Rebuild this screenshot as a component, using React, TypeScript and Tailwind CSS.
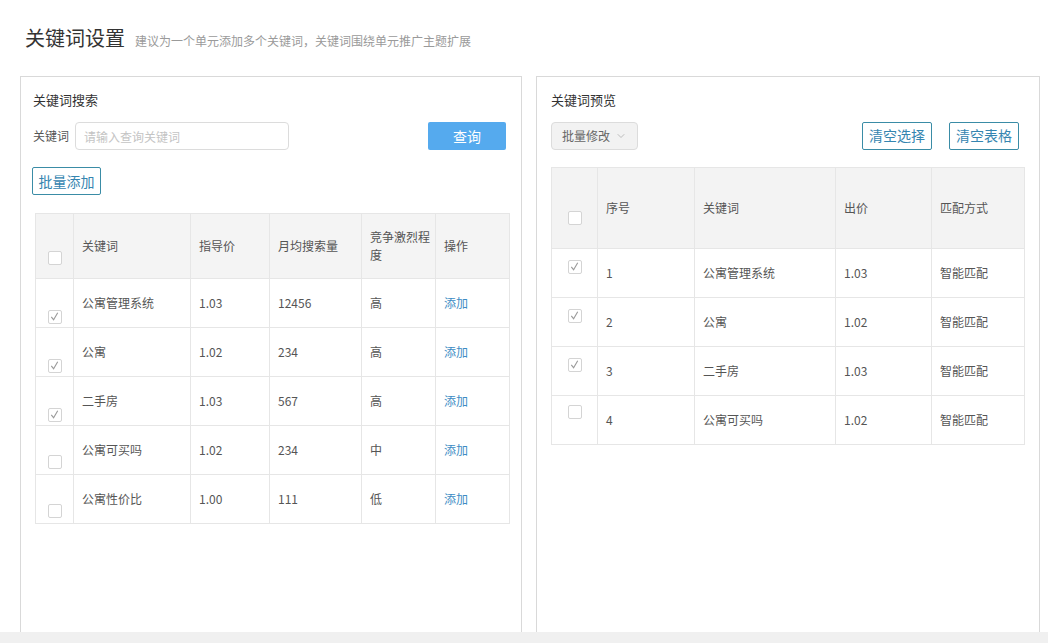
import { ChevronDown } from 'lucide-react';

interface SearchRow {
  keyword: string;
  price: string;
  volume: string;
  level: string;
  checked: boolean;
}

interface PreviewRow {
  index: number;
  keyword: string;
  bid: string;
  match: string;
  checked: boolean;
}

const searchRows: SearchRow[] = [
  { keyword: '公寓管理系统', price: '1.03', volume: '12456', level: '高', checked: true },
  { keyword: '公寓', price: '1.02', volume: '234', level: '高', checked: true },
  { keyword: '二手房', price: '1.03', volume: '567', level: '高', checked: true },
  { keyword: '公寓可买吗', price: '1.02', volume: '234', level: '中', checked: false },
  { keyword: '公寓性价比', price: '1.00', volume: '111', level: '低', checked: false },
];

const previewRows: PreviewRow[] = [
  { index: 1, keyword: '公寓管理系统', bid: '1.03', match: '智能匹配', checked: true },
  { index: 2, keyword: '公寓', bid: '1.02', match: '智能匹配', checked: true },
  { index: 3, keyword: '二手房', bid: '1.03', match: '智能匹配', checked: true },
  { index: 4, keyword: '公寓可买吗', bid: '1.02', match: '智能匹配', checked: false },
];

function Checkbox({ checked }: { checked: boolean }) {
  return (
    <span className="inline-flex h-[14px] w-[14px] items-center justify-center rounded-[2px] border border-[#d4d4d4] bg-white">
      {checked ? (
        <svg viewBox="0 0 12 12" className="h-[11px] w-[11px]" fill="none">
          <path d="M2.5 6.5 L5 9.5 L9.5 2" stroke="#9a9a9a" strokeWidth="1.2" />
        </svg>
      ) : null}
    </span>
  );
}

const cell = 'border border-[#e6e6e6] pl-2 text-left font-normal';

function SearchPanel() {
  return (
    <section className="flex h-full w-[502px] flex-col border-x border-t border-[#d9d9d9] bg-white">
      <h2 className="mt-[14px] pl-3 text-[13px] leading-[18px] text-[#333]">关键词搜索</h2>

      <div className="mt-[13px] flex items-center pl-3 pr-[15px]">
        <span className="text-[12px] text-[#555]">关键词</span>
        <input
          type="text"
          placeholder="请输入查询关键词"
          className="ml-[6px] h-[28px] w-[214px] rounded-[4px] border border-[#dcdcdc] px-2 text-[12px] text-[#333] outline-none placeholder:text-[#c4c4c4]"
        />
        <button
          type="button"
          className="ml-auto h-[28px] w-[78px] rounded-[2px] bg-[#55aaee] text-[14px] text-white"
        >
          查询
        </button>
      </div>

      <div className="mt-[17px] pl-[11px]">
        <button
          type="button"
          className="h-[28px] w-[69px] rounded-[2px] border border-[#3a8ca6] text-[14px] text-[#3585b0]"
        >
          批量添加
        </button>
      </div>

      <div className="mt-[18px] pl-[14px]">
        <table className="w-[474px] table-fixed border-collapse text-[12px] text-[#555]">
          <colgroup>
            <col className="w-[38px]" />
            <col className="w-[117px]" />
            <col className="w-[79px]" />
            <col className="w-[92px]" />
            <col className="w-[74px]" />
            <col className="w-[74px]" />
          </colgroup>
          <thead>
            <tr className="h-[65px] bg-[#f4f4f4]">
              <th className="border border-[#e6e6e6] pb-[9px] text-center align-bottom">
                <Checkbox checked={false} />
              </th>
              <th className={cell}>关键词</th>
              <th className={cell}>指导价</th>
              <th className={cell}>月均搜索量</th>
              <th className={`${cell} pr-1 leading-[18px]`}>竞争激烈程度</th>
              <th className={cell}>操作</th>
            </tr>
          </thead>
          <tbody>
            {searchRows.map((row) => (
              <tr key={row.keyword} className="h-[49px]">
                <td className="border border-[#e6e6e6] pb-[1px] text-center align-bottom">
                  <Checkbox checked={row.checked} />
                </td>
                <td className={cell}>{row.keyword}</td>
                <td className={cell}>{row.price}</td>
                <td className={cell}>{row.volume}</td>
                <td className={cell}>{row.level}</td>
                <td className={`${cell} text-[#3d8cc4]`}>添加</td>
              </tr>
            ))}
          </tbody>
        </table>
      </div>
    </section>
  );
}

function PreviewPanel() {
  return (
    <section className="flex h-full w-[504px] flex-col border-x border-t border-[#d9d9d9] bg-white">
      <h2 className="mt-[14px] pl-[14px] text-[13px] leading-[18px] text-[#333]">关键词预览</h2>

      <div className="mt-[12px] flex items-center pl-[14px] pr-[20px]">
        <button
          type="button"
          className="mt-[1px] flex h-[28px] w-[87px] items-center justify-center gap-[5px] rounded-[4px] border border-[#dcdcdc] bg-[#f2f2f2] text-[12px] text-[#666]"
        >
          批量修改
          <ChevronDown className="h-3 w-3 text-[#aaa]" strokeWidth={1.5} />
        </button>
        <button
          type="button"
          className="ml-auto h-[28px] w-[70px] rounded-[2px] border border-[#3a8ca6] text-[14px] text-[#3585b0]"
        >
          清空选择
        </button>
        <button
          type="button"
          className="ml-[17px] h-[28px] w-[70px] rounded-[2px] border border-[#3a8ca6] text-[14px] text-[#3585b0]"
        >
          清空表格
        </button>
      </div>

      <div className="mt-[17px] pl-[14px]">
        <table className="w-[473px] table-fixed border-collapse text-[12px] text-[#555]">
          <colgroup>
            <col className="w-[46px]" />
            <col className="w-[97px]" />
            <col className="w-[141px]" />
            <col className="w-[96px]" />
            <col className="w-[93px]" />
          </colgroup>
          <thead>
            <tr className="h-[81px] bg-[#f3f3f3]">
              <th className="border border-[#e6e6e6] pb-[19px] text-center align-bottom">
                <Checkbox checked={false} />
              </th>
              <th className={cell}>序号</th>
              <th className={cell}>关键词</th>
              <th className={cell}>出价</th>
              <th className={cell}>匹配方式</th>
            </tr>
          </thead>
          <tbody>
            {previewRows.map((row) => (
              <tr key={row.index} className="h-[49px]">
                <td className="border border-[#e6e6e6] pt-[9px] text-center align-top">
                  <Checkbox checked={row.checked} />
                </td>
                <td className={cell}>{row.index}</td>
                <td className={cell}>{row.keyword}</td>
                <td className={cell}>{row.bid}</td>
                <td className={cell}>{row.match}</td>
              </tr>
            ))}
          </tbody>
        </table>
      </div>
    </section>
  );
}

export default function App() {
  return (
    <div
      className="flex h-[643px] w-[1048px] flex-col overflow-hidden bg-white"
      style={{ fontFamily: '"Noto Sans CJK SC", "Noto Sans", sans-serif' }}
    >
      <header className="flex items-baseline pl-[25px] pt-[25px]">
        <h1 className="text-[20px] leading-[26px] text-[#333]">关键词设置</h1>
        <p className="ml-[10px] text-[12px] text-[#9a9a9a]">建议为一个单元添加多个关键词，关键词围绕单元推广主题扩展</p>
      </header>

      <main className="mt-[25px] flex min-h-0 flex-1 gap-[14px] pl-5">
        <SearchPanel />
        <PreviewPanel />
      </main>

      <footer className="h-[11px] bg-[#f0f0f0]" />
    </div>
  );
}
